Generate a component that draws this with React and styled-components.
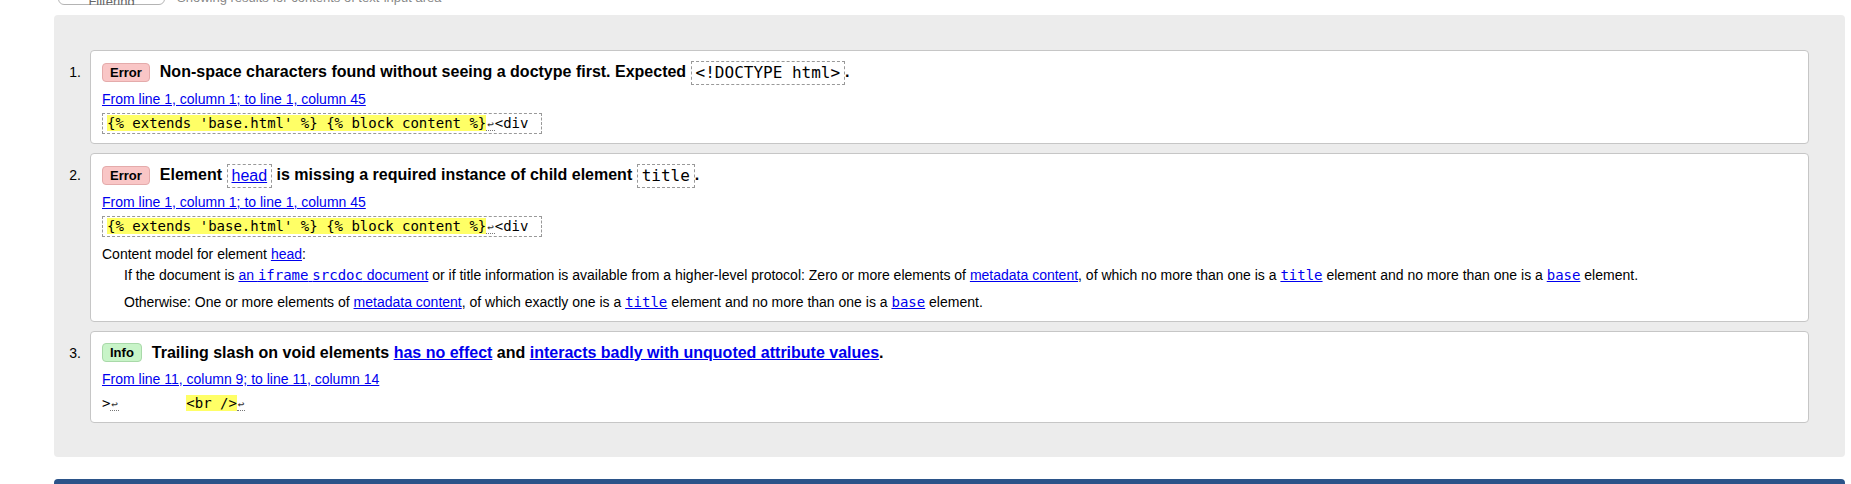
import React from 'react';
import styled, { createGlobalStyle } from 'styled-components';

const GlobalStyle = createGlobalStyle`
  body {
    margin: 0;
    background: #fff;
    color: #000;
    font-family: "Liberation Sans", Arial, sans-serif;
  }
`;

const TopStrip = styled.div`
  height: 5px;
  overflow: hidden;
  display: flex;
  align-items: flex-end;
  gap: 12px;
  padding-left: 58px;
`;

const TopButton = styled.button`
  width: 107px;
  height: 28px;
  border: 1px solid #b4b4b4;
  border-radius: 6px;
  background: #fff;
  color: #666;
  font: 13px "Liberation Sans", Arial, sans-serif;
`;

const TopNote = styled.span`
  font-size: 13px;
  line-height: 14px;
  color: #888;
`;

const Results = styled.ol`
  list-style: none;
  margin: 10px 6px 0 54px;
  padding: 35px 36px 34px 0;
  background: #ececec;
  border-radius: 4px;
  display: flex;
  flex-direction: column;
  gap: 9px;
`;

const Item = styled.li`
  display: flex;
  align-items: flex-start;
`;

const Num = styled.span`
  width: 36px;
  box-sizing: border-box;
  padding: 10px 9px 0 0;
  text-align: right;
  font-size: 14px;
  line-height: 24px;
`;

const Card = styled.div`
  flex: 1;
  background: #fff;
  border: 1px solid #c6c6c6;
  border-radius: 4px;
  padding: 9px 11px;
`;

const Head = styled.div`
  display: flex;
  align-items: center;
  min-height: 24px;
`;

const Badge = styled.strong`
  display: inline-flex;
  align-items: center;
  height: 19px;
  box-sizing: border-box;
  padding: 0 7px;
  margin-right: 10px;
  border-radius: 4px;
  font-size: 13px;
  font-weight: bold;
  background: ${(p) => (p.$kind === 'info' ? '#c8f4c8' : '#f9c6c6')};
  border: 1px solid ${(p) => (p.$kind === 'info' ? '#a9d9a9' : '#e4abab')};
`;

const Title = styled.span`
  font-size: 16px;
  font-weight: bold;
  line-height: 24px;
`;

const Term = styled.span`
  display: inline-block;
  vertical-align: middle;
  border: 1px dashed #999;
  padding: 0 4px;
  line-height: 22px;
  font-weight: normal;
  font-size: 16px;
  font-family: ${(p) =>
    p.$sans ? '"Liberation Sans", Arial, sans-serif' : '"DejaVu Sans Mono", monospace'};
`;

const Link = styled.a`
  color: #0000ee;
  text-decoration: underline;
  cursor: pointer;
`;

const Location = styled.p`
  margin: 4px 0 0;
  font-size: 14px;
  line-height: 20px;
`;

const Extract = styled.div`
  width: fit-content;
  margin-top: 4px;
  border: ${(p) => (p.$plain ? 'none' : '1px dashed #999')};
  padding: ${(p) => (p.$plain ? '0' : '0 4px')};
  font: 14px "DejaVu Sans Mono", monospace;
  line-height: ${(p) => (p.$plain ? '20px' : '19px')};
  white-space: pre;
`;

const Mark = styled.mark`
  background: #ffff66;
  color: inherit;
`;

const LineBreak = styled.span`
  display: inline-block;
  width: 8.43px;
  font-size: 11px;
  line-height: 11px;
  text-align: center;
  color: #333;
  border-bottom: 1px dotted #777;
`;

const Model = styled.p`
  margin: 7px 0 0;
  font-size: 14px;
  line-height: 20px;
`;

const Detail = styled.div`
  margin-left: 22px;
  font-size: 14px;
  line-height: 20px;

  p {
    margin: 7px 0 0;
  }

  p:first-child {
    margin-top: 1px;
  }
`;

const Mono = styled.code`
  font: 14px "DejaVu Sans Mono", monospace;
`;

const Footer = styled.footer`
  margin: 22px 6px 0 54px;
  height: 40px;
  background: #2b5389;
  border-radius: 4px 4px 0 0;
`;

const Lf = () => <LineBreak title="Line break">↩</LineBreak>;

const App = () => {
  return (
    <>
      <GlobalStyle />
      <TopStrip>
        <TopButton>Message Filtering</TopButton>
        <TopNote>Showing results for contents of text-input area</TopNote>
      </TopStrip>

      <Results>
        <Item>
          <Num>1.</Num>
          <Card>
            <Head>
              <Badge>Error</Badge>
              <Title>
                Non-space characters found without seeing a doctype first. Expected{' '}
                <Term>&lt;!DOCTYPE html&gt;</Term>.
              </Title>
            </Head>
            <Location>
              <Link>From line 1, column 1; to line 1, column 45</Link>
            </Location>
            <Extract>
              <Mark>{"{% extends 'base.html' %} {% block content %}"}</Mark>
              <Lf />
              {'<div '}
            </Extract>
          </Card>
        </Item>

        <Item>
          <Num>2.</Num>
          <Card>
            <Head>
              <Badge>Error</Badge>
              <Title>
                Element{' '}
                <Term $sans>
                  <Link>head</Link>
                </Term>{' '}
                is missing a required instance of child element <Term>title</Term>.
              </Title>
            </Head>
            <Location>
              <Link>From line 1, column 1; to line 1, column 45</Link>
            </Location>
            <Extract>
              <Mark>{"{% extends 'base.html' %} {% block content %}"}</Mark>
              <Lf />
              {'<div '}
            </Extract>
            <Model>
              Content model for element <Link>head</Link>:
            </Model>
            <Detail>
              <p>
                If the document is{' '}
                <Link>
                  an <Mono>iframe</Mono> <Mono>srcdoc</Mono> document
                </Link>{' '}
                or if title information is available from a higher-level protocol: Zero or more
                elements of <Link>metadata content</Link>, of which no more than one is a{' '}
                <Link>
                  <Mono>title</Mono>
                </Link>{' '}
                element and no more than one is a{' '}
                <Link>
                  <Mono>base</Mono>
                </Link>{' '}
                element.
              </p>
              <p>
                Otherwise: One or more elements of <Link>metadata content</Link>, of which exactly
                one is a{' '}
                <Link>
                  <Mono>title</Mono>
                </Link>{' '}
                element and no more than one is a{' '}
                <Link>
                  <Mono>base</Mono>
                </Link>{' '}
                element.
              </p>
            </Detail>
          </Card>
        </Item>

        <Item>
          <Num>3.</Num>
          <Card>
            <Head>
              <Badge $kind="info">Info</Badge>
              <Title>
                Trailing slash on void elements <Link>has no effect</Link> and{' '}
                <Link>interacts badly with unquoted attribute values</Link>.
              </Title>
            </Head>
            <Location>
              <Link>From line 11, column 9; to line 11, column 14</Link>
            </Location>
            <Extract $plain>
              {'>'}
              <Lf />
              {'        '}
              <Mark>{'<br />'}</Mark>
              <Lf />
            </Extract>
          </Card>
        </Item>
      </Results>

      <Footer />
    </>
  );
};

export default App;
